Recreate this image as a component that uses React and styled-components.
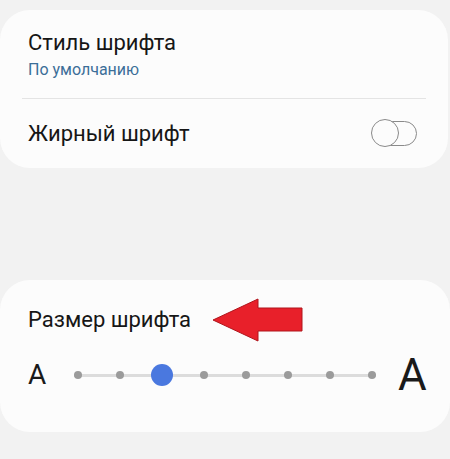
import styled, { createGlobalStyle } from "styled-components";

const Global = createGlobalStyle`
    html, body {
        margin: 0;
        padding: 0;
        background: #f2f2f2;
        font-family: Roboto, "Noto Sans", sans-serif;
    }
`;

const Page = styled.div`
    width: 450px;
    height: 459px;
    padding-top: 10px;
    box-sizing: border-box;
    display: flex;
    flex-direction: column;
    gap: 112px;
    overflow: hidden;
`;

const Card = styled.div`
    background: #fcfcfc;
    border-radius: 30px;
    height: ${props => props.h}px;
    margin-right: ${props => props.mr || 0}px;
    box-sizing: border-box;
    padding: 0 28px;
    display: flex;
    flex-direction: column;
`;

const Row = styled.div`
    display: flex;
    align-items: center;
    justify-content: space-between;
    height: ${props => props.h}px;
    padding-top: ${props => props.pt || 0}px;
    box-sizing: border-box;
`;

const Title = styled.div`
    color: #161616;
    font-size: 22px;
    line-height: 26px;
`;

const Sub = styled.div`
    color: #3b6e98;
    font-size: 16px;
    line-height: 20px;
    margin-top: 4px;
`;

const Divider = styled.div`
    height: 1px;
    background: #e4e4e4;
    margin: 0 -6px;
`;

const Toggle = styled.div`
    position: relative;
    width: 38px;
    height: 23px;
    border: 1.5px solid #8a8a8a;
    border-radius: 13px;
    margin-right: 3px;

    &::before {
        content: "";
        position: absolute;
        left: -7px;
        top: -3px;
        width: 26px;
        height: 26px;
        border-radius: 50%;
        border: 1.5px solid #8a8a8a;
        background: #fcfcfc;
    }
`;

const TitleRow = styled.div`
    display: flex;
    align-items: center;
    gap: 21px;
    height: 76px;
    padding-top: 2px;
`;

const SliderRow = styled.div`
    display: flex;
    align-items: center;
    height: 30px;
    margin: 2px -4px 0 0;
`;

const Letter = styled.div`
    font-size: ${props => props.size}px;
    line-height: 1;
    color: #1a1a1a;
    width: ${props => props.w}px;
    text-align: ${props => props.align};
`;

const Track = styled.div`
    flex: 1;
    position: relative;
    height: 22px;
    display: flex;
    align-items: center;
    justify-content: space-between;
    margin: 0 ${props => props.mr}px 0 ${props => props.ml}px;

    &::before {
        content: "";
        position: absolute;
        left: 0;
        right: 0;
        top: 10px;
        height: 3px;
        background: #dcdcdc;
    }
`;

const Dot = styled.div`
    position: relative;
    width: ${props => (props.active ? 22 : 8)}px;
    height: ${props => (props.active ? 22 : 8)}px;
    margin: 0 ${props => (props.active ? -7 : 0)}px;
    border-radius: 50%;
    background: ${props => (props.active ? "#4a78df" : "#9b9b9b")};
`;

const Arrow = () => (
    <svg width="92" height="44" viewBox="0 0 92 44">
        <path
            d="M1 22 L46 1 L46 10 L90 10 L90 33 L46 33 L46 43 Z"
            fill="#e8202a"
            stroke="#b0141b"
            strokeWidth="1"
            strokeLinejoin="round"
        />
    </svg>
);

const steps = [0, 1, 2, 3, 4, 5, 6, 7];

const App = () => {
    return (
        <Page>
            <Global />
            <Card h={158} mr={2}>
                <Row h={88} pt={2}>
                    <div>
                        <Title>Стиль шрифта</Title>
                        <Sub>По умолчанию</Sub>
                    </div>
                </Row>
                <Divider />
                <Row h={69}>
                    <Title>Жирный шрифт</Title>
                    <Toggle />
                </Row>
            </Card>

            <Card h={152}>
                <TitleRow>
                    <Title>Размер шрифта</Title>
                    <Arrow />
                </TitleRow>
                <SliderRow>
                    <Letter size={28} w={20} align="left">A</Letter>
                    <Track ml={26} mr={22}>
                        {steps.map(s => <Dot key={s} active={s === 2} />)}
                    </Track>
                    <Letter size={44} w={28} align="right">A</Letter>
                </SliderRow>
            </Card>
        </Page>
    );
};

export default App;
